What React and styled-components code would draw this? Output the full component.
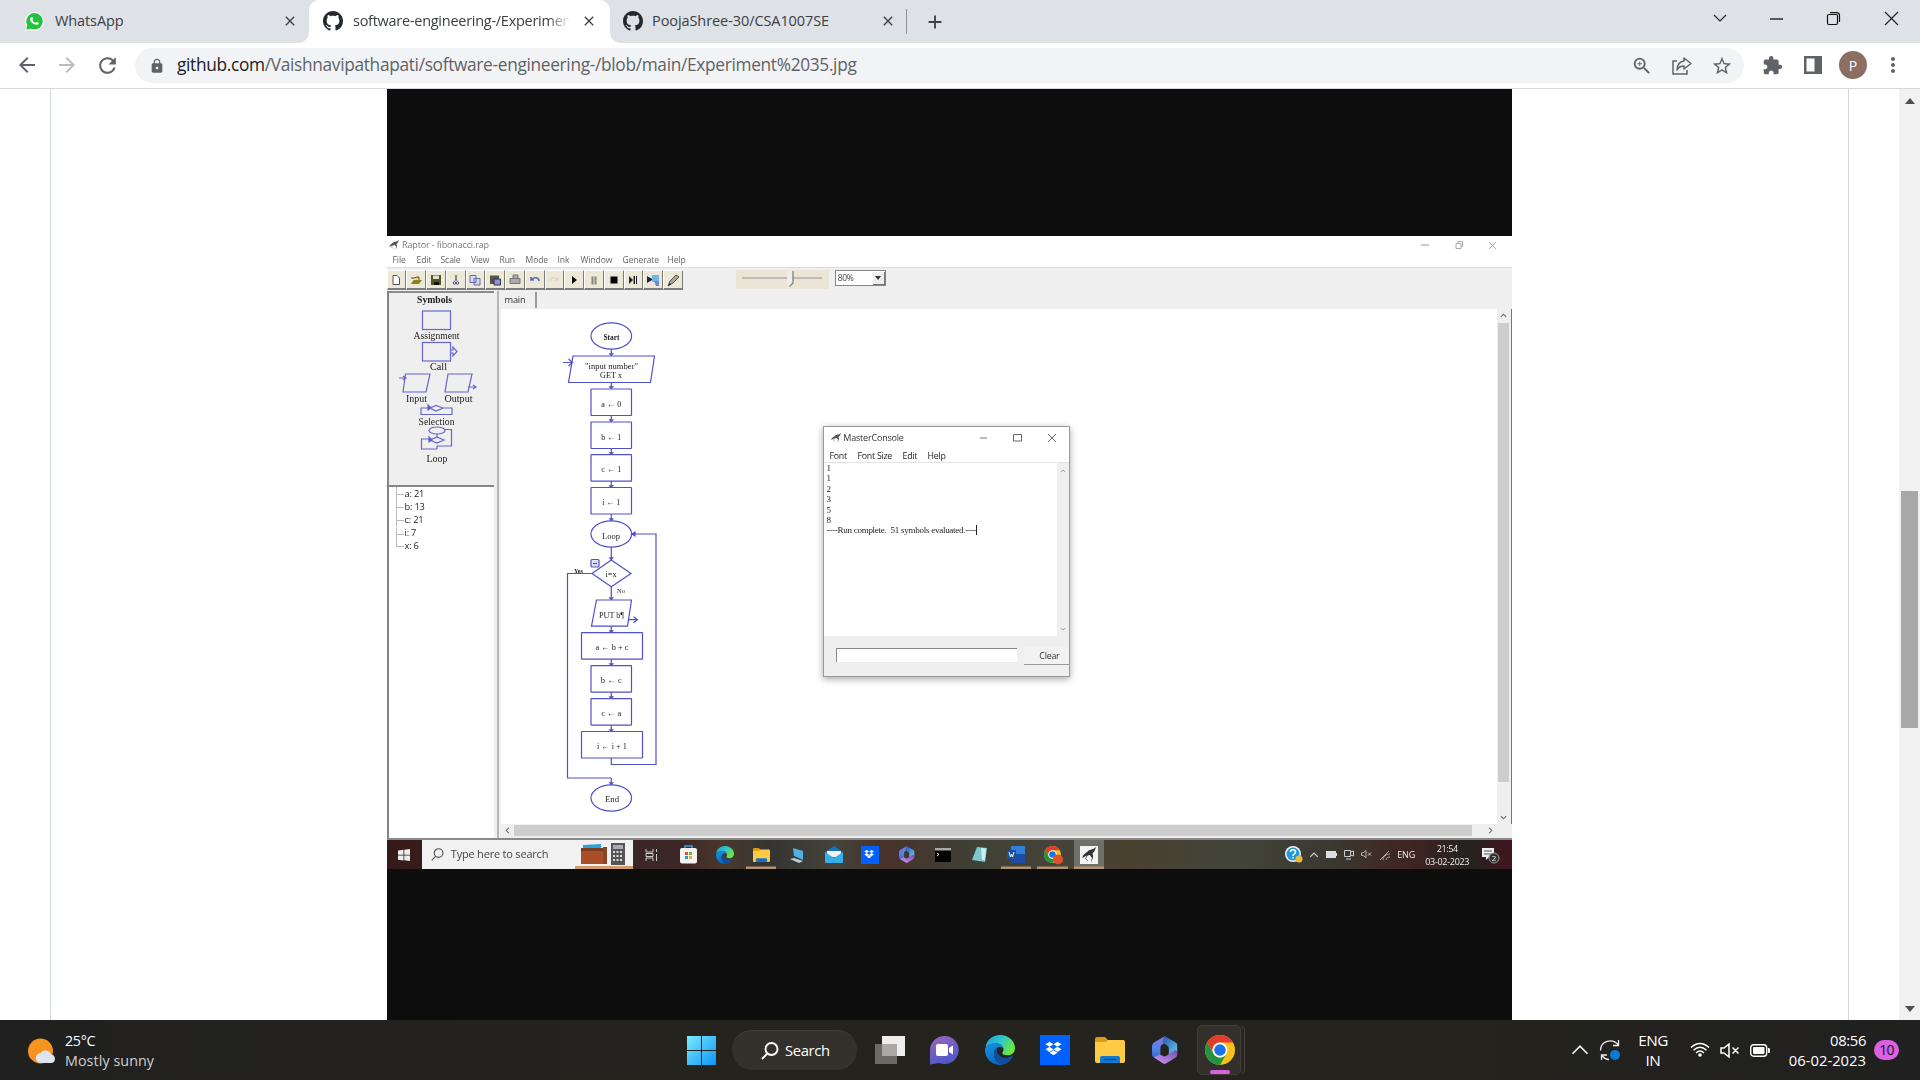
import React from "react";
import styled, { createGlobalStyle } from "styled-components";
import { MdArrowBack, MdArrowForward, MdRefresh, MdLock, MdZoomIn, MdStarBorder, MdExtension, MdClose, MdAdd, MdMoreVert } from "react-icons/md";
import { FaDropbox } from "react-icons/fa";

const Global = createGlobalStyle`
  * { box-sizing: border-box; }
  body { margin: 0; overflow: hidden; font-family: "Open Sans", "Noto Sans", sans-serif; }
  svg { display: block; flex: none; overflow: visible; }
`;

const Page = styled.div`
  width: 1920px;
  height: 1080px;
  display: flex;
  flex-direction: column;
  background: #fff;
`;
const Text = styled.span`
  display: block;
  white-space: pre;
  font-size: ${(p) => p.$size}px;
  letter-spacing: ${(p) => p.$ls || 0}px;
  color: ${(p) => p.$color || "inherit"};
  line-height: ${(p) => p.$lh || 1.3};
`;
const Cell = styled.div`
  width: ${(p) => p.$w}px;
  flex: none;
  display: flex;
  align-items: center;
  justify-content: center;
  margin-left: ${(p) => p.$ml || 0}px;
`;

/* ---------- browser chrome ---------- */
const TabStrip = styled.div`
  height: 43px;
  flex: none;
  display: flex;
  background: #dee1e6;
  color: #3c4043;
`;
const Tab = styled.div`
  width: ${(p) => p.$w}px;
  display: flex;
  align-items: center;
  padding: 0 ${(p) => p.$pr}px 1px ${(p) => p.$pl}px;
  background: ${(p) => (p.$active ? "#fff" : "transparent")};
  border-radius: 10px 10px 0 0;
  position: relative;
  &::before, &::after {
    content: "";
    display: ${(p) => (p.$active ? "block" : "none")};
    position: absolute;
    bottom: 0;
    width: 10px;
    height: 10px;
  }
  &::before { left: -10px; background: radial-gradient(circle at 0 0, #dee1e6 9.5px, #fff 10px); }
  &::after { right: -10px; background: radial-gradient(circle at 100% 0, #dee1e6 9.5px, #fff 10px); }
`;
const TabTitle = styled(Text)`
  flex: 1;
  min-width: 0;
  margin-left: ${(p) => p.$ml}px;
  margin-right: 11px;
  ${(p) => p.$fade && "mask-image: linear-gradient(90deg, #000 90%, transparent);"}
`;
const TabDivider = styled.div`
  width: 1px;
  height: 25px;
  margin: 9px 0 0 0;
  background: #8d9095;
`;
const WindowButtons = styled.div`
  display: flex;
  align-items: center;
  margin-left: auto;
  padding: 0 0 6px;
  color: #111;
`;
const Toolbar = styled.div`
  height: 46px;
  flex: none;
  display: flex;
  align-items: center;
  padding: 0 0 1px 7px;
  border-bottom: 1px solid #d6d8db;
  color: #5f6368;
`;
const Omnibox = styled.div`
  width: 1609px;
  height: 35px;
  margin-left: 8px;
  border-radius: 18px;
  background: #f1f3f4;
  display: flex;
  align-items: center;
  padding: 1px 2px 0 14px;
`;
const Url = styled(Text)`
  flex: 1;
  margin-left: 12px;
  color: #5f6368;
  b { font-weight: 400; color: #202124; }
`;
const Avatar = styled.div`
  width: 28px;
  height: 28px;
  border-radius: 50%;
  background: #8d6e63;
  color: #fff;
  font-size: 14px;
  display: grid;
  place-items: center;
`;

/* ---------- page content ---------- */
const Content = styled.div`
  height: 931px;
  flex: none;
  display: flex;
`;
const FileBox = styled.div`
  width: 1799px;
  margin-left: 50px;
  border: solid #d0d7de;
  border-width: 0 1px;
  display: flex;
  justify-content: center;
  padding-right: 1px;
`;
const ScrollTrack = styled.div`
  width: 21px;
  margin-left: auto;
  background: #f1f1f1;
  display: flex;
  flex-direction: column;
  align-items: center;
  padding: 9px 0 8px;
`;
const Arrow = styled.div`
  border: 5px solid transparent;
  border-width: ${(p) => (p.$up ? "0 5px 6px" : "6px 5px 0")};
  border-${(p) => (p.$up ? "bottom" : "top")}-color: #505050;
`;
const ScrollThumb = styled.div`
  width: 17px;
  height: 237px;
  margin: 387px 0 auto;
  background: #a8a8a8;
`;
const Photo = styled.div`
  width: 1125px;
  background: #0d0d0d;
  padding-top: 147px;
  overflow: hidden;
`;
const Soft = styled.div`
  filter: blur(0.75px);
  position: relative;
`;

/* ---------- Raptor window ---------- */
const Raptor = styled.div`
  height: 604px;
  background: #efefef;
  display: flex;
  flex-direction: column;
  border-bottom: 2px solid #8a8a8a;
`;
const RTitle = styled.div`
  height: 17px;
  flex: none;
  background: #fff;
  display: flex;
  align-items: center;
  padding: 1px 0 0 2px;
  color: #7a7a7a;
`;
const RMenu = styled.div`
  height: 15px;
  flex: none;
  background: #fff;
  display: flex;
  align-items: center;
  padding: 2px 0 0 6px;
  color: #666;
  border-bottom: 1px solid #ddd;
`;
const MenuItem = styled(Text)`
  width: ${(p) => p.$w}px;
`;
const RTools = styled.div`
  height: 23px;
  flex: none;
  display: flex;
  align-items: flex-start;
  padding-top: 2px;
`;
const ToolButton = styled.div`
  width: 19.75px;
  height: 20px;
  background: #ece9d8;
  border: 1px solid #fff;
  border-right: 1.5px solid #7d7d7a;
  border-bottom: 2px solid #7d7d7a;
  display: grid;
  place-items: center;
`;
const Slider = styled.div`
  width: 93px;
  height: 19px;
  margin-left: 53px;
  background: #ebe5d6;
  display: flex;
  align-items: center;
  justify-content: center;
`;
const Combo = styled.div`
  width: 51px;
  height: 16px;
  margin-left: 6px;
  background: #fff;
  border: 1.5px solid #858585;
  display: flex;
  align-items: center;
  justify-content: space-between;
  padding-left: 2px;
  color: #444;
`;
const ComboButton = styled.div`
  width: 12px;
  height: 13px;
  background: #eee;
  border: solid #777;
  border-width: 0 1px 1px 0;
  display: grid;
  place-items: center;
`;
const RBody = styled.div`
  flex: 1;
  min-height: 0;
  display: flex;
`;
const SidePane = styled.div`
  width: 107px;
  flex: none;
  display: flex;
  flex-direction: column;
  border-left: 2px solid #858585;
`;
const SymbolsPane = styled.div`
  height: 194px;
  flex: none;
  border-top: 2px solid #8b8b8b;
`;
const Tree = styled.div`
  flex: 1;
  background: #fff;
  border-top: 2px solid #858585;
  padding: 0 0 0 7px;
  color: #222;
`;
const TreeItem = styled.div`
  height: 13.2px;
  display: flex;
  align-items: center;
  gap: 1px;
  &::before {
    content: "";
    width: 7px;
    height: 13px;
    border-left: 1px solid #bbb;
    background: linear-gradient(#bbb, #bbb) 0 7px / 7px 1px no-repeat;
  }
  &:last-child::before { height: 7px; margin-top: -6px; border-bottom: 1px solid #bbb; background: none; }
`;
const Main = styled.div`
  flex: 1;
  min-width: 0;
  display: flex;
  flex-direction: column;
  margin-left: 3px;
  border-left: 2px solid #b5b5b5;
`;
const MainTabs = styled.div`
  height: 18px;
  flex: none;
  display: flex;
  padding: 1px 0 0 6px;
  color: #333;
`;
const MainTab = styled.div`
  width: 32px;
  height: 16px;
  border-right: 2px solid #999;
  display: flex;
  align-items: center;
`;
const CanvasRow = styled.div`
  flex: 1;
  display: flex;
  margin-left: 2px;
`;
const Canvas = styled.div`
  flex: 1;
  background: #fff;
`;
const VBar = styled.div`
  width: 15px;
  flex: none;
  display: flex;
  flex-direction: column;
  align-items: center;
  justify-content: space-between;
  padding: 3px 0;
  border-right: 1px solid #777;
`;
const VThumb = styled.div`
  width: 11px;
  height: 459px;
  margin-bottom: 29px;
  background: #cdcdcd;
`;
const HBar = styled.div`
  height: 13px;
  flex: none;
  display: flex;
  align-items: center;
  padding-left: 5px;
  gap: 3px;
  margin-bottom: 1px;
`;
const HThumb = styled.div`
  width: 958px;
  height: 11px;
  background: #cdcdcd;
  margin-right: 12px;
`;

/* ---------- console window ---------- */
const Console = styled.div`
  position: absolute;
  left: 436px;
  top: 190px;
  width: 247px;
  height: 251px;
  background: #efefef;
  border: 1px solid #9a9a9a;
  box-shadow: 0 2px 7px rgba(0, 0, 0, 0.35);
  display: flex;
  flex-direction: column;
`;
const CTitle = styled.div`
  height: 21px;
  background: #fff;
  display: flex;
  align-items: center;
  padding-left: 7px;
  color: #333;
`;
const CMenu = styled.div`
  height: 15px;
  background: #fff;
  display: flex;
  align-items: center;
  padding: 3px 0 0 6px;
  border-bottom: 1px solid #e4e4e4;
  color: #222;
`;
const COutput = styled.div`
  height: 173px;
  display: flex;
`;
const CText = styled.div`
  flex: 1;
  background: #fff;
  padding: 0 0 0 3px;
  font: 9px/10.4px "Liberation Serif", serif;
  white-space: pre;
  color: #222;
  span { border-right: 1px solid #222; letter-spacing: -0.26px; }
`;
const CScroll = styled.div`
  width: 12px;
  display: flex;
  flex-direction: column;
  align-items: center;
  justify-content: space-between;
  padding: 5px 0 4px;
`;
const CForm = styled.div`
  flex: 1;
  display: flex;
  padding: 12px 0 0 12px;
`;
const CInput = styled.div`
  width: 181px;
  height: 14px;
  background: #fff;
  border: solid #888;
  border-width: 1.5px 0 0 1.5px;
`;
const CButton = styled.div`
  width: 45px;
  height: 18px;
  margin: -1px 0 0 7px;
  border: solid #999;
  border-width: 0 0 1.5px;
  background: #f2f2f2;
  display: flex;
  align-items: center;
  justify-content: flex-end;
  padding: 2px 9px 0 0;
  color: #333;
`;

/* ---------- inner desktop bar ---------- */
const InnerBar = styled.div`
  height: 29px;
  display: flex;
  align-items: stretch;
  background: linear-gradient(90deg, #351a19 0, #3b2826 26%, #4a382e 30%, #353431 34%, #45433a 40%, #47322a 44%, #3f4036 52%, #46433a 60%, #49402f 66%, #42443a 75%, #3b3830 84%, #402421 91%, #24231f 96%, #421520 100%);
  color: #eee;
`;
const InnerSearch = styled.div`
  width: 211px;
  background: #f1f1f1;
  display: flex;
  align-items: center;
  color: #444;
  padding-left: 9px;
  margin-right: 1px;
`;
const InnerApp = styled.div`
  width: 36.45px;
  display: flex;
  align-items: center;
  justify-content: center;
  background: ${(p) => (p.$on ? "#6f7067" : "transparent")};
  box-shadow: inset 0 ${(p) => (p.$open ? "-2.5px" : "0")} 0 #b3916d;
  background-clip: content-box;
  margin: 0 ${(p) => (p.$open ? 3 : 0)}px;
  ${(p) => p.$open && "width: 30.45px;"}
`;
const Clock = styled.div`
  width: ${(p) => p.$w}px;
  display: flex;
  flex-direction: column;
  align-items: ${(p) => p.$align || "center"};
  justify-content: center;
  margin-left: ${(p) => p.$ml || 0}px;
`;

/* ---------- bottom desktop bar ---------- */
const TaskBar = styled.div`
  height: 60px;
  flex: none;
  display: flex;
  align-items: center;
  background: linear-gradient(90deg, #202020 0, #25231e 35%, #24231d 75%, #202020 100%);
  color: #fff;
`;
const Weather = styled.div`
  width: 672px;
  display: flex;
  align-items: center;
  padding: 1px 0 0 27px;
  gap: 9px;
`;
const SearchPill = styled.div`
  width: 125px;
  height: 40px;
  border-radius: 20px;
  background: #34312d;
  border-top: 1px solid #42403b;
  display: flex;
  align-items: center;
  padding-left: 29px;
  gap: 6px;
  margin-left: 2px;
`;
const ActiveApp = styled.div`
  width: 44px;
  height: 50px;
  margin-left: 19px;
  border: 1px solid #423f3a;
  border-radius: 5px;
  background: #33302b;
  box-shadow: 4px 0 0 -1px #292722, 5px 0 0 -1px #45423d;
  display: flex;
  flex-direction: column;
  align-items: center;
  padding: 9px 0 0 2px;
`;
const Underline = styled.div`
  width: 20px;
  height: 4px;
  margin-top: 5px;
  border-radius: 2px;
  background: #d85fe0;
`;
const Tray = styled.div`
  display: flex;
  align-items: center;
  margin-left: auto;
`;
const Badge = styled.div`
  width: 25px;
  height: 20px;
  margin: 0 21px 0 8px;
  border-radius: 10px;
  background: #dc60e4;
  color: #20121f;
  display: grid;
  place-items: center;
`;

const GitHub = () => (
  <svg width="20" height="20" viewBox="0 0 16 16" fill="#24292f">
    <path d="M8 0C3.58 0 0 3.58 0 8c0 3.54 2.29 6.53 5.47 7.59.4.07.55-.17.55-.38 0-.19-.01-.82-.01-1.49-2.01.37-2.53-.49-2.69-.94-.09-.23-.48-.94-.82-1.13-.28-.15-.68-.52-.01-.53.63-.01 1.08.58 1.23.82.72 1.21 1.87.87 2.33.66.07-.52.28-.87.51-1.07-1.78-.2-3.64-.89-3.64-3.95 0-.87.31-1.59.82-2.15-.08-.2-.36-1.02.08-2.12 0 0 .67-.21 2.2.82.64-.18 1.32-.27 2-.27s1.36.09 2 .27c1.53-1.04 2.2-.82 2.2-.82.44 1.1.16 1.92.08 2.12.51.56.82 1.27.82 2.15 0 3.07-1.87 3.75-3.65 3.95.29.25.54.73.54 1.48 0 1.07-.01 1.93-.01 2.2 0 .21.15.46.55.38A8.01 8.01 0 0 0 16 8c0-4.42-3.58-8-8-8z" />
  </svg>
);
const WhatsAppIcon = () => (
  <svg width="19" height="19" viewBox="0 0 19 19">
    <circle cx="9.5" cy="9.5" r="9.5" fill="#fff" />
    <path d="M0 19 2 12l5 5z" fill="#fff" />
    <circle cx="9.5" cy="9.3" r="8.3" fill="#25c23e" />
    <path d="M1.2 17.8 2.6 12l4.4 4.2z" fill="#25c23e" />
    <path d="M6.3 5.2c.8-.7 1.3-.2 1.8 1.3.2.7-.8 1-.6 1.4.6 1.300 1.700 2.300 3 2.900.5.2.8-1 1.500-.8 1.600.6 2 1.100 1.500 1.900-1.800 2.500-8.500-1-8.400-4.800 0-.8.5-1.400 1.200-1.900z" fill="#fff" />
  </svg>
);
const Chrome = ({ s }) => (
  <svg width={s} height={s} viewBox="0 0 48 48">
    <circle cx="24" cy="24" r="24" fill="#fbc116" />
    <path d="M3.200 12A24 24 0 0 1 44.800 12H24A12 12 0 0 0 13.600 30z" fill="#e33b2e" />
    <path d="M3.200 12A24 24 0 0 0 24 48L34.400 30A12 12 0 0 1 13.600 30z" fill="#229342" />
    <circle cx="24" cy="24" r="12" fill="#fff" />
    <circle cx="24" cy="24" r="9.300" fill="#1a73e8" />
  </svg>
);
const Edge = ({ s, id }) => (
  <svg width={s} height={s} viewBox="0 0 30 30">
    <defs>
      <linearGradient id={`${id}a`} x1="0" y1="0" x2="1" y2=".5">
        <stop offset="0" stopColor="#1d9fe0" /><stop offset=".5" stopColor="#2cc3d2" /><stop offset="1" stopColor="#6be838" />
      </linearGradient>
      <linearGradient id={`${id}b`} x1="0" y1="0" x2="0.4" y2="1">
        <stop offset="0" stopColor="#1495e0" /><stop offset="1" stopColor="#0969c4" />
      </linearGradient>
    </defs>
    <path d="M.5 12C1.500 5 7.500 0 15 0c9 0 15 6.500 15 13 0 4.500-3.200 7.300-7.500 7.300-3.200 0-5.300-1-5.300-2.300 0-.9 1.300-1.500 1.300-3.600C18.500 11 15 8.500 11 8.500 6.500 8.500 2.500 10 .5 12z" fill={`url(#${id}a)`} />
    <path d="M0 15C0 11 4.500 8.300 10 8.300c5 0 8.500 3 8.500 6-.5-1.500-2-2.300-3.500-2.300-4 0-6 3.500-6 7 0 5 4 10 9 10.600C8 31.500 0 24 0 15z" fill={`url(#${id}b)`} />
    <path d="M9 19c0-2.500 1-5.200 3.300-6.400C11 16 13 22.500 20 22.800c3 .1 5-1 6.800-1.900 1.200-.5 1.500.4 1 1.200C25.500 26 21.500 29.500 17 29.700 12.500 29.300 9 24 9 19z" fill="#114f9e" />
  </svg>
);
const Folder = ({ w, h }) => (
  <svg width={w} height={h} viewBox="0 0 30 26" preserveAspectRatio="none">
    <path d="M0 2q0-2 2-2h8l3 3v5H0z" fill="#dd9b0a" />
    <path d="M0 5h11l2-2h15q2 0 2 2v19q0 2-2 2H2q-2 0-2-2z" fill="#ffcb45" />
    <path d="M5 26v-5q0-2 2-2h16q2 0 2 2v5z" fill="#1379cf" />
    <path d="M9 22.500h12" stroke="#0a4c8c" strokeWidth="1.200" />
  </svg>
);
const Office = ({ s, id }) => (
  <svg width={s * 0.9} height={s} viewBox="0 0 27 30">
    <defs>
      <linearGradient id={`${id}p`} x1="0" y1="0" x2="0" y2="1"><stop offset="0" stopColor="#8f6ee0" /><stop offset=".5" stopColor="#4f86e8" /><stop offset="1" stopColor="#3a55c0" /></linearGradient>
      <linearGradient id={`${id}q`} x1="0" y1="0" x2="1" y2="1"><stop offset="0" stopColor="#2d4fa8" /><stop offset="1" stopColor="#5fd0f5" /></linearGradient>
      <linearGradient id={`${id}r`} x1="0" y1="1" x2="1" y2="0"><stop offset="0" stopColor="#cf98f0" /><stop offset="1" stopColor="#7350b0" /></linearGradient>
    </defs>
    <path d="M14 0 2 7Q0 8.500 0 11v9q0 2 2 3l7 4V12q0-2 2-3l4-3z" fill={`url(#${id}p)`} />
    <path d="m13.500 0 12 7q1.500 1 1.500 3v8l-9 2v-7q0-2-2-3l-5-3z" fill={`url(#${id}q)`} />
    <path d="M2 23l6-3.500 4 2q1.500.7 3 0L25 15q2 0 2 3v2q0 2-2 3.200l-9.500 5.900q-2 1.200-4 0z" fill={`url(#${id}r)`} />
  </svg>
);
const Dropbox = ({ s }) => (
  <svg width={s} height={s} viewBox="0 0 30 30">
    <rect width="30" height="30" fill="#0061fe" />
    <FaDropbox x="5.500" y="5.500" width="19" height="19" color="#fff" />
  </svg>
);
const Bird = ({ s = 10, color = "#555" }) => (
  <svg width={s} height={s} viewBox="0 0 10 10" fill={color}>
    <path d="M10 0 8 1.200 5 2 1 5 0 7l3-1.500L5.500 5 7 6.500 6.500 10 8 6 7.500 4 9 2.500z" />
    <path d="M4 5 2.500 7 4 8.500" fill="none" stroke={color} strokeWidth=".5" />
  </svg>
);
const Chevron = ({ d = "up", s = 8, color = "#999", w = 1.200 }) => (
  <svg width={s} height={s} viewBox="0 0 8 8" fill="none" stroke={color} strokeWidth={w}>
    <path d={{ up: "M1 5.500 4 2.500 7 5.500", down: "M1 2.500 4 5.500 7 2.500", left: "M5.500 1 2.500 4 5.500 7", right: "M2.500 1 5.500 4 2.500 7" }[d]} />
  </svg>
);
const MagnifierIcon = ({ s, color, w }) => (
  <svg width={s} height={s} viewBox="0 0 18 18" fill="none" stroke={color} strokeWidth={w}>
    <circle cx="10.500" cy="7" r="6" /><path d="M6.300 11.500 1 17" />
  </svg>
);
const Speaker = ({ w, color }) => (
  <svg width={w} height={w * 0.75} viewBox="0 0 20 15" fill="none" stroke={color} strokeWidth="1.500">
    <path d="M1 5h3l5-4v13l-5-4H1zM12.500 4.500l6 6M18.500 4.500l-6 6" />
  </svg>
);

const toolIcons = [
  <g key="0" fill="#fff" stroke="#555"><path d="M3 1.500h4l2.500 2.500v6.500H3z" /></g>,
  <g key="1"><path d="M1 4h4l1-1h3v3" fill="#d9d25a" stroke="#555" /><path d="M1 10 3.500 6H12l-3 4z" fill="#8a8420" /></g>,
  <g key="2"><path d="M1 1h10v10H1z" fill="#55571c" /><path d="M3 1.500h6V5H3z" fill="#ddd" /><path d="M4 8h5v3H4z" fill="#111" /></g>,
  <g key="3" stroke="#4b4b96" fill="none"><path d="M5 1l2 6M7 1 5 7" stroke="#777" /><circle cx="4.500" cy="9" r="1.300" /><circle cx="7.500" cy="9" r="1.300" /></g>,
  <g key="4" fill="#d5d9ec" stroke="#6a6aa8"><path d="M1 1.500h6v7H1zM5 4.500h6v6.500H5z" /></g>,
  <g key="5"><path d="M1 1.500h9V10H1z" fill="#55554a" /><path d="M5 5h6.500v6H5z" fill="#8a95d8" stroke="#334" /></g>,
  <g key="6" fill="#aaa" stroke="#777"><path d="M4 4V1h5v3M1 4.500h10v5H1z" /></g>,
  <g key="7" fill="none" stroke="#5868b4" strokeWidth="1.600"><path d="M2 3v3h3M2.500 5.500C5 3 10 3 10 7" /></g>,
  <g key="8" fill="none" stroke="#dcd6bd" strokeWidth="1.200"><path d="M10 3v3H7M9.500 5.500C7 3 2 3 2 7" /></g>,
  <path key="9" d="M4 2 9 6 4 10z" fill="#111" />,
  <path key="10" d="M3.500 2.500H5.500v8H3.500zM6.500 2.500h2v8h-2z" fill="#85857a" />,
  <path key="11" d="M2.500 2.500h7v7H2.500z" fill="#000" />,
  <path key="12" d="M2 2 6 6 2 10zM6.500 2h1.500v8H6.500zM9 2h1v8H9z" fill="#222" />,
  <g key="13"><path d="M0 2 6 5.500 0 9z" fill="#224" /><path d="M5 1h7v7H5z" fill="#6fb8e0" /><path d="M7 7h5v5H9z" fill="#7b86c8" /></g>,
  <g key="14"><path d="M1 12 3 7l6-6 3 2-6 6z" fill="#aa9" stroke="#555" /><path d="m1 12 2-3 1 1z" fill="#111" /></g>,
];

const B = "#5050c8";
const Serif = ({ x, y, s = 8.500, w, children, bold, fill = "#222" }) => (
  <text x={x} y={y} fontSize={s} textAnchor="middle" textLength={w} lengthAdjust="spacingAndGlyphs" fontFamily="Liberation Serif, serif" fontWeight={bold ? 700 : 400} fill={fill} xmlSpace="preserve">{children}</text>
);

/* palette of flowchart symbols */
const Symbols = () => (
  <svg width="105" height="190" viewBox="389 293 105 190" fill="none" stroke="#6666cf" strokeWidth="1.200">
    <rect x="422.500" y="311" width="28" height="18.500" />
    <rect x="422.500" y="342.500" width="28" height="18.500" />
    <path d="M451 350h2v-3l4 4.500-4 4.500v-3h-2" />
    <path d="M405.500 374H430l-4 18H403zM399 378h7m-3-2 3 2-3 2" />
    <path d="M448 374h24l-4 18H445zM468 387h8m-3-2 3 2-3 2" />
    <path d="M430 408h-9v6.500h31V408h-10M430 408l6-2.500 7 2.500-7 3z" />
    <ellipse cx="437" cy="430.500" rx="8" ry="3.500" /><path d="M445 429.500h6.500V446H437v3M437 434v3M437 437l7 3-7 3-7-3zM430 439h-8.500v10H437" />
    <path d="m428 405 3 3-3 2zM429 437l3 3-3 2z" fill="#4444bb" />
    <g stroke="none">
      <Serif x={434.500} y={302.500} s={10} w={35} bold>Symbols</Serif>
      <Serif x={436.500} y={338.500} s={10} w={46}>Assignment</Serif>
      <Serif x={438.500} y={370} s={10} w={17}>Call</Serif>
      <Serif x={416.500} y={401.500} s={10} w={21}>Input</Serif>
      <Serif x={458.500} y={401.500} s={10} w={28}>Output</Serif>
      <Serif x={436.500} y={425} s={10} w={36}>Selection</Serif>
      <Serif x={437} y={461.500} s={10} w={21}>Loop</Serif>
    </g>
  </svg>
);

const boxes = [
  [591, 389, 40.500, "a ← 0", 20], [591, 422, 40.500, "b ← 1", 20], [591, 454.700, 40.500, "c ← 1", 20], [591, 487.500, 40.500, "i ← 1", 18],
  [581.500, 632.700, 61, "a ← b + c", 33], [591, 665.700, 40.500, "b ← c", 21], [591, 698.600, 40.500, "c ← a", 20], [581.500, 731.500, 61, "i ← i + 1", 30],
];
const links = [[349, 356], [382, 389], [415, 422], [448, 455], [481, 488], [514, 521], [547, 560], [587, 600], [626, 633], [659, 666], [692, 699], [725, 732], [778, 785]];
const Flowchart = () => (
  <svg width="200" height="505" viewBox="501 309 200 505" fill="none" stroke={B} strokeWidth="1.200">
    {links.map(([a, b]) => <g key={a}><path d={`M611.300 ${a}V${b}`} /><path d={`M609 ${b - 2.500}h4.600l-2.300 2.500z`} fill={B} strokeWidth=".5" /></g>)}
    {[336, 534, 798].map((y) => <ellipse key={y} cx="611.300" cy={y} rx="20.300" ry="13.200" />)}
    <path d="M573 356h81.500l-4 26.500h-82zM563 362.500h9.500m-4-3.500 4 3.500-4 3.500" />
    {boxes.map(([x, y, w]) => <rect key={y} x={x} y={y} width={w} height="26.500" rx=".5" />)}
    <path d="M611.300 560 631 573.500 611.300 586.700 592 573.500z" />
    <path d="M596.500 600h35l-4 26.200h-36zM628 619.700h9.500m-4-3 4 3-4 3" />
    <path d="M592 573.500H567.500V778h43.800M611.300 758v6.500H656V534H632" />
    <path d="m632 534 3-2v4z" fill={B} />
    <rect x="591" y="559.500" width="8" height="7.500" rx="1" fill="#dedef5" /><path d="M593 563.500h4" />
    <g stroke="none">
      <Serif x={611.500} y={340} w={16} s={8} bold>Start</Serif>
      <Serif x={611.500} y={368.700} w={53}>"input number"</Serif>
      <Serif x={611} y={377.500} w={22}>GET x</Serif>
      {boxes.map(([x, y, w, t, l]) => <Serif key={y} x={x + w / 2} y={y + 17.500} w={l}>{t}</Serif>)}
      <Serif x={611} y={538.500} w={18} s={9}>Loop</Serif>
      <Serif x={611} y={577} w={11}>i=x</Serif>
      <Serif x={578.500} y={572.700} w={9} s={6} bold>Yes</Serif>
      <Serif x={621} y={592.500} w={8} s={6.500}>No</Serif>
      <Serif x={611.500} y={617.500} w={25}>PUT b¶</Serif>
      <Serif x={612} y={802.200} w={14} s={9}>End</Serif>
    </g>
  </svg>
);

const menus = [["File", 24], ["Edit", 24], ["Scale", 30.500], ["View", 28.500], ["Run", 26], ["Mode", 32], ["Ink", 23], ["Window", 42], ["Generate", 45], ["Help", 30]];

const RaptorWindow = () => (
  <Raptor>
    <RTitle>
      <Bird />
      <Cell $w={90} $ml={2}><Text $size={9} $ls={-0.150}>Raptor - fibonacci.rap</Text></Cell>
      <Cell $w={34} $ml={917}><svg width="8" height="8" stroke="#999"><path d="M0 4h8" /></svg></Cell>
      <Cell $w={34}><svg width="8" height="8" stroke="#aaa" fill="none"><path d="M1 2.500h5v5H1zM3 2V.5h4.500v5H6" /></svg></Cell>
      <Cell $w={34}><svg width="7" height="7" stroke="#aaa"><path d="m0 0 7 7M7 0 0 7" /></svg></Cell>
    </RTitle>
    <RMenu>{menus.map(([m, w]) => <MenuItem key={m} $size={8.600} $w={w} $ls={-0.100}>{m}</MenuItem>)}</RMenu>
    <RTools>
      {toolIcons.map((icon, i) => <ToolButton key={i}><svg width="12" height="12" viewBox="0 0 12 12">{icon}</svg></ToolButton>)}
      <Slider>
        <svg width="80" height="17"><path d="M0 7h80" stroke="#bdbbb3" strokeWidth="2" /><path d="M45 0h6v12l-3 4-3-3z" fill="#eee" /><path d="M51 0v12l-3.500 3.500" stroke="#888" fill="none" strokeWidth="1.400" /></svg>
      </Slider>
      <Combo><Text $size={8.500} $ls={-0.300}>80%</Text><ComboButton><svg width="6" height="4"><path d="M0 0h6L3 4z" fill="#333" /></svg></ComboButton></Combo>
    </RTools>
    <RBody>
      <SidePane>
        <SymbolsPane><Symbols /></SymbolsPane>
        <Tree>{["a: 21", "b: 13", "c: 21", "i: 7", "x: 6"].map((t) => <TreeItem key={t}><Text $size={9.300} $ls={-0.200}>{t}</Text></TreeItem>)}</Tree>
      </SidePane>
      <Main>
        <MainTabs><MainTab><Text $size={9.300} $ls={-0.200}>main</Text></MainTab></MainTabs>
        <CanvasRow>
          <Canvas><Flowchart /></Canvas>
          <VBar><Chevron s={7} color="#666" /><VThumb /><Chevron d="down" s={7} color="#666" /></VBar>
        </CanvasRow>
        <HBar><Chevron d="left" s={7} color="#666" /><HThumb /><Chevron d="right" s={7} color="#666" /></HBar>
      </Main>
    </RBody>
  </Raptor>
);

const MasterConsole = () => (
  <Console>
    <CTitle>
      <Bird s={10} />
      <Cell $w={60} $ml={3}><Text $size={9} $ls={-0.200}>MasterConsole</Text></Cell>
      <Cell $w={34} $ml={63}><svg width="7" height="8" stroke="#777"><path d="M0 4h7" /></svg></Cell>
      <Cell $w={34}><svg width="9" height="8" stroke="#666" fill="none"><path d="M.5 .5h8v6.500h-8z" /></svg></Cell>
      <Cell $w={34}><svg width="8" height="8" stroke="#666"><path d="m0 0 8 8M8 0 0 8" /></svg></Cell>
    </CTitle>
    <CMenu>{[["Font", 28], ["Font Size", 45], ["Edit", 25], ["Help", 30]].map(([m, w]) => <MenuItem key={m} $size={8.800} $w={w} $ls={-0.250}>{m}</MenuItem>)}</CMenu>
    <COutput>
      <CText>{"1\n1\n2\n3\n5\n8\n"}<span>----Run complete.  51 symbols evaluated.----</span></CText>
      <CScroll><Chevron s={6} color="#999" /><Chevron d="down" s={6} color="#999" /></CScroll>
    </COutput>
    <CForm><CInput /><CButton><Text $size={8.800} $ls={-0.200}>Clear</Text></CButton></CForm>
  </Console>
);

const innerApps = [
  [<svg key="i" width="13" height="12" fill="none" stroke="#ccc"><path d="M1 0v3h7V0M1 12V9h7v3M1 4.500h7v3H1zM11.500 0v3M11.500 5v7" /></svg>],
  [<svg key="i" width="17" height="19"><path d="M5 4V1h7v3" fill="none" stroke="#3aa5dd" strokeWidth="1.500" /><rect y="3" width="17" height="15.500" rx="2" fill="#f4f4f4" /><path d="M5 7h3v3H5z" fill="#e2532c" /><path d="M9 7h3v3H9z" fill="#7bb52c" /><path d="M5 11h3v3H5z" fill="#269ad6" /><path d="M9 11h3v3H9z" fill="#f0b020" /></svg>],
  [<Edge key="i" s={18} id="ei" />],
  [<Folder key="i" w={17} h={14} />, true],
  [<svg key="i" width="17" height="16"><path d="m4 1 10 3v9L5 9z" fill="#4fb0e8" /><path d="m1 12 4-1 9 3-4 2z" fill="#bcd" /></svg>],
  [<svg key="i" width="18" height="17"><path d="M0 6 9 0l9 6v11H0z" fill="#1577bd" /><path d="M2 5h14v6H2z" fill="#f3f3f3" /><path d="m0 6 9 6 9-6v11H0z" fill="#35aeea" /></svg>],
  [<Dropbox key="i" s={18} />],
  [<Office key="i" s={17} id="oi" />],
  [<svg key="i" width="16" height="14"><path d="M0 0h16v14H0z" fill="#050505" /><path d="M0 0h16v2.500H0z" fill="#aaa" /><path d="m2 5 2 1.500L2 8" stroke="#ddd" fill="none" /></svg>],
  [<svg key="i" width="16" height="15"><path d="m5 0 10 1-2 14L0 13z" fill="#7fc6cf" /><path d="m9 1 5 .5-1 12-3-1z" fill="#cdeef0" /></svg>],
  [<svg key="i" width="18" height="17"><path d="M4 0h14v17H4z" fill="#2f7fd6" /><path d="M4 8h14v9H4z" fill="#1b4ea3" /><path d="M0 4h9v9H0z" fill="#1850a8" /><path d="m2 6 1.500 5L4.500 8l1 3L7 6" stroke="#fff" fill="none" /></svg>, true],
  [<svg key="i" width="18" height="18"><Chrome s={17} /><circle cx="14" cy="13.500" r="5" fill="#e0502a" /></svg>, true],
  [<svg key="i" width="18" height="18"><path d="M0 0h18v18H0z" fill="#f4f4f4" /><g transform="translate(2 1) scale(1.400 1.600)"><Bird color="#333" /></g></svg>, true, true],
];

const InnerTaskbar = () => (
  <InnerBar>
    <Cell $w={35}><svg width="12" height="12" fill="#eee"><path d="M0 1.500 5.500.8v4.900H0zM6.300.7 12 0v5.700H6.300zM0 6.500h5.500v5L0 10.800zM6.300 6.500H12V12l-5.700-.7z" /></svg></Cell>
    <InnerSearch>
      <MagnifierIcon s={13} color="#555" w={1.600} />
      <Cell $w={96} $ml={8}><Text $size={11} $ls={-0.200}>Type here to search</Text></Cell>
      <Cell $w={58} $ml={27}>
        <svg width="58" height="29">
          <path d="M0 26h58v3H0z" fill="#d29b6c" /><path d="M8 5l18-1v6H8z" fill="#2aa4dd" /><path d="M6 8h26v16H6z" fill="#a84f28" /><path d="M6 8h26v3H6z" fill="#7d3b22" /><path d="M28 7h4v17h-4z" fill="#87452c" />
          <path d="M36 3h14v22H36z" fill="#555" /><path d="M38 5h10v4H38z" fill="#aab" /><path d="M38 12h10M38 16h10M38 20h10" stroke="#ddd" strokeWidth="2" strokeDasharray="2 1.500" />
        </svg>
      </Cell>
    </InnerSearch>
    {innerApps.map(([icon, open, on], i) => <InnerApp key={i} $open={open} $on={on}>{icon}</InnerApp>)}
    <Cell $w={24} $ml={174}>
      <svg width="17" height="17"><circle cx="8" cy="8" r="8" fill="#e8f6ff" /><circle cx="8" cy="8" r="6.500" fill="#2498d6" /><path d="M5.500 6c0-3 5-3 5 0 0 2-2.500 2-2.500 4M8 11v1.500" stroke="#fff" fill="none" strokeWidth="1.600" /><circle cx="14" cy="13" r="3.500" fill="#e9bd3a" /></svg>
    </Cell>
    <Cell $w={18}><Chevron s={10} color="#ccc" w={1} /></Cell>
    <Cell $w={17}><svg width="11" height="7"><path d="M0 0h10v7H0zM10 2h1v3h-1z" fill="#ddd" /></svg></Cell>
    <Cell $w={18}><svg width="10" height="11" stroke="#ccc" fill="none"><path d="M.5 1.500h6v6h-6zM6.500 3l3-1v5l-3-1M2 10h5" /></svg></Cell>
    <Cell $w={17}><Speaker w={11} color="#ccc" /></Cell>
    <Cell $w={19}><svg width="10" height="10" stroke="#aaa" fill="none"><path d="M0 10 9 1M3 10c0-3 3-6 7-6M6 10c0-2 2-3 4-3" /></svg></Cell>
    <Cell $w={24}><Text $size={9} $ls={-0.200}>ENG</Text></Cell>
    <Clock $w={58}><Text $size={9} $ls={-0.400} $lh="13px">21:54</Text><Text $size={9} $ls={-0.300} $lh="13px">03-02-2023</Text></Clock>
    <Cell $w={30}>
      <svg width="18" height="18"><path d="M0 2h12v9H7l-3 3v-3H0z" fill="#eee" /><path d="M2 5h8M2 8h8" stroke="#555" /><circle cx="12" cy="12" r="5" fill="#333" stroke="#999" /><text x="12" y="15" fontSize="8" textAnchor="middle" fill="#eee" fontFamily="Open Sans, sans-serif">2</text></svg>
    </Cell>
  </InnerBar>
);

export default function App() {
  return (
    <Page>
      <Global />
      <TabStrip>
        <Tab $w={309} $pl={25} $pr={11}><WhatsAppIcon /><TabTitle $size={14.500} $ml={11} $ls={-0.100}>WhatsApp</TabTitle><MdClose size={16} /></Tab>
        <Tab $w={301} $pl={14} $pr={13} $active><GitHub /><TabTitle $size={14.500} $ml={10} $ls={-0.270} $fade>software-engineering-/Experimen</TabTitle><MdClose size={16} /></Tab>
        <Tab $w={296} $pl={13} $pr={10}><GitHub /><TabTitle $size={14.500} $ml={9} $ls={-0.080}>PoojaShree-30/CSA1007SE</TabTitle><MdClose size={16} /></Tab>
        <TabDivider />
        <Cell $w={56}><MdAdd size={22} /></Cell>
        <WindowButtons>
          <Cell $w={57}><svg width="12" height="7" fill="none" stroke="#222" strokeWidth="1.200"><path d="m0 0 6 6 6-6" /></svg></Cell>
          <Cell $w={57}><svg width="13" height="2"><path d="M0 1h13" stroke="#111" strokeWidth="1.300" /></svg></Cell>
          <Cell $w={57}><svg width="13" height="13" fill="none" stroke="#111" strokeWidth="1.200"><rect x=".5" y="2.500" width="10" height="10" rx="1.500" /><path d="M3 .6h6.500q3 0 3 3V10" /></svg></Cell>
          <Cell $w={58}><svg width="13" height="13" stroke="#222" strokeWidth="1.200"><path d="m0 0 13 13M13 0 0 13" /></svg></Cell>
        </WindowButtons>
      </TabStrip>
      <Toolbar>
        <Cell $w={40}><MdArrowBack size={24} /></Cell>
        <Cell $w={40}><MdArrowForward size={24} color="#babcbe" /></Cell>
        <Cell $w={40}><MdRefresh size={25} /></Cell>
        <Omnibox>
          <MdLock size={16} />
          <Url $size={17.300} $ls={-0.315}><b>github.com</b>/Vaishnavipathapati/software-engineering-/blob/main/Experiment%2035.jpg</Url>
          <Cell $w={40}><MdZoomIn size={22} /></Cell>
          <Cell $w={40}><svg width="20" height="18" viewBox="0 0 20 18" fill="none" stroke="#5f6368" strokeWidth="1.500"><path d="M5 4H1v13h14v-4" /><path d="M12 1l7 5.500-7 5.500V9C9 9 6.500 10 5 13c.3-5 3-8.500 7-9z" strokeLinejoin="round" /></svg></Cell>
          <Cell $w={40}><MdStarBorder size={22} /></Cell>
        </Omnibox>
        <Cell $w={40} $ml={8}><MdExtension size={21} /></Cell>
        <Cell $w={40} $ml={0.500}><svg width="18" height="18"><path d="M0 0h18v18H0z" fill="#5f6368" /><path d="M2.500 2.500h8v13h-8z" fill="#fff" /></svg></Cell>
        <Cell $w={40} $ml={0.500}><Avatar>P</Avatar></Cell>
        <Cell $w={40}><MdMoreVert size={24} /></Cell>
      </Toolbar>
      <Content>
        <FileBox>
          <Photo><Soft><RaptorWindow /><InnerTaskbar /><MasterConsole /></Soft></Photo>
        </FileBox>
        <ScrollTrack><Arrow $up /><ScrollThumb /><Arrow /></ScrollTrack>
      </Content>
      <TaskBar>
        <Weather>
          <svg width="29" height="26"><circle cx="13.500" cy="13" r="12.500" fill="#f5941f" /><path d="M14 25a5 5 0 0 1-.5-10 6 6 0 0 1 10.500 1.500A4.300 4.300 0 0 1 24.500 25z" fill="#dfe5ee" /></svg>
          <div><Text $size={14.300} $ls={-0.300} $lh="20px">25°C</Text><Text $size={14.300} $ls={0.080} $lh="20px" $color="#cfcfcf">Mostly sunny</Text></div>
        </Weather>
        <Cell $w={58}>
          <svg width="29" height="29"><defs><linearGradient id="win" gradientUnits="userSpaceOnUse" x1="0" y1="0" x2="29" y2="29"><stop offset="0" stopColor="#7cebfd" /><stop offset="1" stopColor="#0a95f6" /></linearGradient></defs><path d="M0 0h14v14H0zM15 0h14v14H15zM0 15h14v14H0zM15 15h14v14H15z" fill="url(#win)" /></svg>
        </Cell>
        <SearchPill><MagnifierIcon s={18} color="#fff" w={1.900} /><Text $size={14.800} $ls={-0.350}>Search</Text></SearchPill>
        <Cell $w={30} $ml={18}><svg width="30" height="28"><path d="M7 0h23v20H7z" fill="#ededed" /><path d="M0 8h22v20H0z" fill="#6b6a68" /><path d="M7 8h15v12H7z" fill="#aaa9a8" /></svg></Cell>
        <Cell $w={29} $ml={25}><svg width="29" height="29"><defs><linearGradient id="chat" x1="0" y1="0" x2=".4" y2="1"><stop offset="0" stopColor="#9a66bd" /><stop offset="1" stopColor="#5059c9" /></linearGradient></defs><path d="M14.500 0a14 14 0 1 1-5 27L0 28.500V14A14.500 14.500 0 0 1 14.500 0z" fill="url(#chat)" /><rect x="6" y="8" width="12" height="12" rx="2" fill="#fff" /><path d="m19 12 4-2.500v9L19 16z" fill="#fff" /></svg></Cell>
        <Cell $w={30} $ml={26}><Edge s={30} id="eo" /></Cell>
        <Cell $w={30} $ml={25}><Dropbox s={30} /></Cell>
        <Cell $w={30} $ml={25}><Folder w={30} h={26} /></Cell>
        <Cell $w={27} $ml={26}><Office s={28} id="oo" /></Cell>
        <ActiveApp><Chrome s={30} /><Underline /></ActiveApp>
        <Tray>
          <Cell $w={40}><Chevron s={20} w={0.700} color="#eee" /></Cell>
          <Cell $w={20}><svg width="20" height="20" fill="none" stroke="#eee" strokeWidth="1.300"><path d="M.5 10.500C.5 1 12-2.500 18.500 5M18.500 0v5.500H13M9 19.500c-3 0-5-1.500-6.500-3.500M1.500 20v-5H7" /><circle cx="15" cy="15" r="5" fill="#0a7ad8" stroke="none" /></svg></Cell>
          <Clock $w={40} $ml={13}><Text $size={15.300} $ls={-0.550} $lh="20px">ENG</Text><Text $size={15.300} $ls={-0.500} $lh="20px">IN</Text></Clock>
          <Cell $w={20} $ml={17}><svg width="20" height="16" fill="none" stroke="#fff" strokeWidth="1.400"><path d="M1 5.500q9-8 18 0M3.500 8.200q6.500-6 13 0M6 11q4-4 8 0" /><circle cx="10" cy="13" r="1.800" fill="#fff" stroke="none" /></svg></Cell>
          <Cell $w={20} $ml={10}><Speaker w={20} color="#fff" /></Cell>
          <Cell $w={20} $ml={10}><svg width="20" height="13"><rect x=".7" y=".7" width="16" height="11.500" rx="3" fill="none" stroke="#fff" strokeWidth="1.400" /><rect x="3" y="3" width="11.500" height="7" rx="1" fill="#fff" /><path d="M18 4h1q1 0 1 1.500v2Q20 9 19 9h-1z" fill="#fff" /></svg></Cell>
          <Clock $w={96} $align="flex-end"><Text $size={14.800} $ls={-0.350} $lh="20px">08:56</Text><Text $size={14.800} $ls={0} $lh="20px">06-02-2023</Text></Clock>
          <Badge><Text $size={14} $ls={-0.700}>10</Text></Badge>
        </Tray>
      </TaskBar>
    </Page>
  );
}
